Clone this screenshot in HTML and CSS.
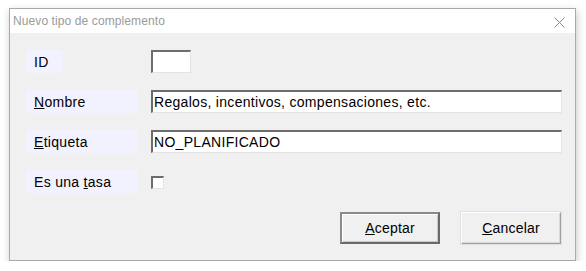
FILE: index.html
```html
<!DOCTYPE html>
<html>
<head>
<meta charset="utf-8">
<link rel="stylesheet" href="styles.css">
</head>
<body>
<div class="window">
  <div class="titlebar">
    <span class="title">Nuevo tipo de complemento</span>
    <svg class="close" width="11" height="11" viewBox="0 0 11 11"><path d="M0.5 0.5L10.5 10.5M10.5 0.5L0.5 10.5" stroke="#8a8a8a" stroke-width="1" fill="none"/></svg>
  </div>
  <div class="body">
    <div class="row">
      <div class="label short"><span>ID</span></div>
      <div class="field id-field"></div>
    </div>
    <div class="row">
      <div class="label"><span><u>N</u>ombre</span></div>
      <div class="field wide"><span>Regalos, incentivos, compensaciones, etc.</span></div>
    </div>
    <div class="row">
      <div class="label"><span><u>E</u>tiqueta</span></div>
      <div class="field wide"><span>NO_PLANIFICADO</span></div>
    </div>
    <div class="row">
      <div class="label"><span>Es una <u>t</u>asa</span></div>
      <div class="checkcell"><div class="check"></div></div>
    </div>
    <div class="buttons">
      <div class="btn default"><span><u>A</u>ceptar</span></div>
      <div class="btn"><span><u>C</u>ancelar</span></div>
    </div>
  </div>
</div>
</body>
</html>
```
FILE: styles.css
```css
html, body {
  margin: 0;
  padding: 0;
  background: #ffffff;
}
body {
  padding: 8px 0 0 9px;
  font-family: "Liberation Sans", Arial, sans-serif;
}
.window {
  width: 565px;
  height: 251px;
  border: 1px solid #a9a9a9;
  background: #f0f0f0;
  box-shadow: 1px 3px 8px rgba(0,0,0,0.22);
  display: flex;
  flex-direction: column;
}
.titlebar {
  height: 24px;
  background: #ffffff;
  display: flex;
  align-items: center;
  justify-content: space-between;
  padding: 0 10px 0 3px;
}
.title {
  font-size: 12px;
  color: #9a9a9a;
  margin-top: -1px;
  letter-spacing: 0.1px;
}
.close {
  margin-top: 2px;
}
.body {
  flex: 1;
  padding: 17px 13px 0 16px;
  display: flex;
  flex-direction: column;
  gap: 17px;
  font-size: 14px;
  letter-spacing: 0.3px;
  color: #000;
}
.row {
  display: flex;
  align-items: center;
  height: 23px;
  gap: 13px;
}
.label {
  width: 112px;
  height: 23px;
  box-sizing: border-box;
  background: #f2f2fe;
  border-radius: 4px;
  padding-left: 8px;
  display: flex;
  align-items: center;
  white-space: pre;
}
.label u, .btn u {
  text-decoration: underline;
  text-underline-offset: 1px;
}
.label.short {
  width: 37px;
}
.row:first-child {
  gap: 88px;
}
.field {
  height: 23px;
  box-sizing: border-box;
  background: #fff;
  border-top: 2px solid #6d6d6d;
  border-left: 2px solid #6d6d6d;
  border-right: 1px solid #e3e3e3;
  border-bottom: 1px solid #e3e3e3;
  padding-left: 1px;
  display: flex;
  align-items: center;
  white-space: nowrap;
}
.id-field {
  width: 40px;
}
.wide {
  flex: 1;
}
.checkcell {
  display: flex;
  align-items: center;
  height: 23px;
}
.check {
  width: 13px;
  height: 13px;
  box-sizing: border-box;
  background: #fff;
  border-top: 2px solid #6d6d6d;
  border-left: 2px solid #6d6d6d;
  border-right: 1px solid #e3e3e3;
  border-bottom: 1px solid #e3e3e3;
  margin-top: 1px;
}
.buttons {
  display: flex;
  justify-content: flex-end;
  gap: 21px;
  margin-top: 2px;
  padding-right: 1px;
}
.btn {
  width: 100px;
  height: 32px;
  box-sizing: border-box;
  background: #f0f0f0;
  border-top: 1px solid #ffffff;
  border-left: 1px solid #ffffff;
  border-right: 1px solid #a0a0a0;
  border-bottom: 1px solid #a0a0a0;
  box-shadow: inset -1px -1px 0 #d8d8d8, 0 0 0 1px #e0e0e0;
  display: flex;
  align-items: center;
  justify-content: center;
  letter-spacing: 0.2px;
}
.btn.default {
  border: 2px solid #6a6a6a;
  border-top-color: #8a8a8a;
  border-left-color: #8a8a8a;
  box-shadow: inset 1px 1px 0 #ffffff, inset -1px -1px 0 #c8c8c8;
}
```
